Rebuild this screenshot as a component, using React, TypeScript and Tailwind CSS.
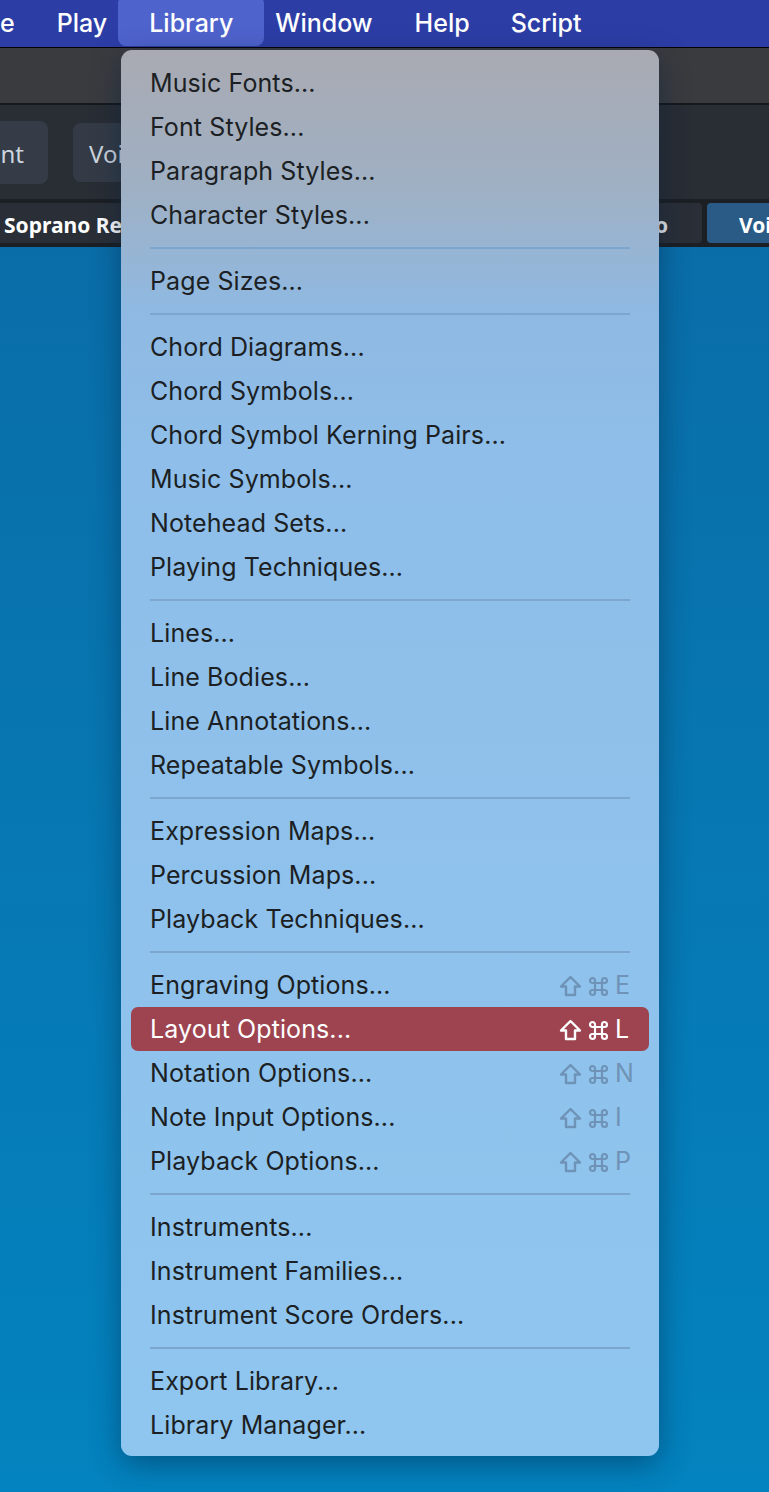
import React from 'react';

type Item = { label: string; keys?: string; active?: boolean } | 'sep';

const items: Item[] = [
  { label: 'Music Fonts...' },
  { label: 'Font Styles...' },
  { label: 'Paragraph Styles...' },
  { label: 'Character Styles...' },
  'sep',
  { label: 'Page Sizes...' },
  'sep',
  { label: 'Chord Diagrams...' },
  { label: 'Chord Symbols...' },
  { label: 'Chord Symbol Kerning Pairs...' },
  { label: 'Music Symbols...' },
  { label: 'Notehead Sets...' },
  { label: 'Playing Techniques...' },
  'sep',
  { label: 'Lines...' },
  { label: 'Line Bodies...' },
  { label: 'Line Annotations...' },
  { label: 'Repeatable Symbols...' },
  'sep',
  { label: 'Expression Maps...' },
  { label: 'Percussion Maps...' },
  { label: 'Playback Techniques...' },
  'sep',
  { label: 'Engraving Options...', keys: 'E' },
  { label: 'Layout Options...', keys: 'L', active: true },
  { label: 'Notation Options...', keys: 'N' },
  { label: 'Note Input Options...', keys: 'I' },
  { label: 'Playback Options...', keys: 'P' },
  'sep',
  { label: 'Instruments...' },
  { label: 'Instrument Families...' },
  { label: 'Instrument Score Orders...' },
  'sep',
  { label: 'Export Library...' },
  { label: 'Library Manager...' },
];

function ShiftIcon() {
  return (
    <svg width="23" height="22" viewBox="0 0 23 22" fill="none" stroke="currentColor" strokeWidth="2.4" strokeLinejoin="round">
      <path d="M11.5 2 L21 11.5 H16 V20 H7 V11.5 H2 Z" />
    </svg>
  );
}

function CmdIcon() {
  return (
    <svg width="21" height="21" viewBox="0 0 21 21" fill="none" stroke="currentColor" strokeWidth="2.2">
      <path d="M7 7 H14 V14 H7 Z" />
      <path d="M7 7 V4.5 A2.5 2.5 0 1 0 4.5 7 H7" />
      <path d="M14 7 V4.5 A2.5 2.5 0 1 1 16.5 7 H14" />
      <path d="M7 14 V16.5 A2.5 2.5 0 1 1 4.5 14 H7" />
      <path d="M14 14 V16.5 A2.5 2.5 0 1 0 16.5 14 H14" />
    </svg>
  );
}

function MenuRow({ label, keys, active }: { label: string; keys?: string; active?: boolean }) {
  return (
    <div
      className={
        active
          ? 'mx-[10px] h-[44px] flex items-center justify-between pl-[19px] pr-[19px] pt-[2px] rounded-[7px] bg-[#9d4450] text-white'
          : 'h-[44px] flex items-center justify-between pl-[29px] pr-[29px] pt-[2px] text-[#1c1f23]'
      }
    >
      <span>{label}</span>
      {keys && (
        <span className={`flex items-center gap-[6px] ${active ? 'text-white' : 'text-[#6f93b6]'}`}>
          <ShiftIcon />
          <CmdIcon />
          <span className="w-[15px] text-left">{keys}</span>
        </span>
      )}
    </div>
  );
}

export default function App() {
  return (
    <div className="relative w-[769px] h-[1492px] overflow-hidden font-['Inter',sans-serif] bg-[linear-gradient(to_bottom,#0b69a3,#0383bf)]">
      {/* macOS menu bar */}
      <div className="h-[48px] flex items-center bg-[#2c3ea6] text-white text-[25px] font-medium border-b border-black">
        <span className="pr-[21px]">e</span>
        <span className="px-[21px]">Play</span>
        <span className="relative px-[21px]">
          <span className="absolute -left-[10px] -right-[10px] -top-[6px] h-[47px] rounded-b-[8px] rounded-t-[4px] bg-[#4f63cd]" />
          <span className="relative">Library</span>
        </span>
        <span className="px-[21px]">Window</span>
        <span className="px-[21px]">Help</span>
        <span className="px-[20px]">Script</span>
      </div>

      {/* app title strip */}
      <div className="h-[57px] bg-[#3a3b3f] border-b-2 border-[#17181b]" />

      {/* toolbar */}
      <div className="h-[94px] bg-[#292d34] flex items-center gap-[25px] font-['Noto_Sans',sans-serif] text-[24px] text-[#cdd5df]">
        <div className="-ml-[20px] w-[68px] h-[63px] rounded-[8px] bg-[#353c47] flex items-center justify-end pr-[24px] pt-[4px]">nt</div>
        <div className="w-[120px] h-[59px] rounded-[8px] bg-[#343b46] flex items-center pl-[16px] pt-[4px]">Voi</div>
      </div>

      {/* tab strip */}
      <div className="h-[48px] bg-[#1c1f24] flex items-center justify-between font-['Noto_Sans',sans-serif] text-[21px] font-bold text-white">
        <div className="h-[40px] w-[130px] bg-[#2a2f37] rounded-r-[4px] flex items-center pl-[4px] pt-[5px]">Soprano Re</div>
        <div className="flex items-center gap-[5px]">
          <div className="h-[40px] w-[108px] bg-[#2a2f37] rounded-[4px] flex items-center justify-end pr-[34px] pt-[5px] text-[#e6e9ee]">o</div>
          <div className="h-[40px] w-[62px] bg-[#2a5b86] rounded-l-[4px] flex items-center pl-[32px] pt-[5px]">Voi</div>
        </div>
      </div>

      {/* Library menu */}
      <div className="absolute left-[121px] top-[50px] w-[538px] pt-[11px] pb-[9px] rounded-[11px] text-[25px] tracking-[0.1px] shadow-[0_8px_30px_rgba(0,30,60,0.45)] bg-[linear-gradient(to_bottom,#a9aab2_0px,#9fb0c4_140px,#8fb9e2_260px,#8ebee9_400px,#8fc6ef_100%)]">
        {items.map((it, i) =>
          it === 'sep' ? (
            <div key={i} className="h-[22px] flex items-center px-[29px]">
              <div className="h-[2px] w-full bg-[#7ca6cd]" />
            </div>
          ) : (
            <MenuRow key={i} label={it.label} keys={it.keys} active={it.active} />
          )
        )}
      </div>
    </div>
  );
}
